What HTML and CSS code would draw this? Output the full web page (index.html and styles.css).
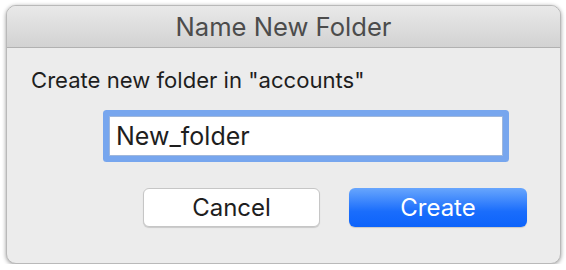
FILE: index.html
```html
<!DOCTYPE html>
<html>
<head>
<meta charset="utf-8">
<link rel="stylesheet" href="styles.css">
</head>
<body>
<div class="window">
  <div class="titlebar">Name New Folder</div>
  <div class="content">
    <div class="prompt">Create new folder in "accounts"</div>
    <div class="field-row">
      <div class="field">New_folder</div>
    </div>
    <div class="buttons">
      <div class="btn cancel">Cancel</div>
      <div class="btn create">Create</div>
    </div>
  </div>
</div>
</body>
</html>
```
FILE: styles.css
```css
html, body {
  margin: 0;
  padding: 0;
  background: #ffffff;
}
body {
  padding: 5px 5px 0 6px;
  font-family: Inter, "Liberation Sans", sans-serif;
}
.window {
  width: 555px;
  height: 259px;
  box-sizing: border-box;
  border-radius: 10px;
  background: #ececec;
  border: 1px solid #b9b9b9;
  box-shadow: 0 1px 4px rgba(0,0,0,0.4);
  overflow: hidden;
  display: flex;
  flex-direction: column;
}
.titlebar {
  height: 42px;
  flex: none;
  box-sizing: border-box;
  background: linear-gradient(#e9e9e9, #d2d2d2);
  border-bottom: 1px solid #b1b1b1;
  color: #4c4c4c;
  font-size: 25.6px;
  display: flex;
  align-items: center;
  justify-content: center;
  padding-bottom: 1px;
}
.content {
  flex: 1;
  display: flex;
  flex-direction: column;
  padding: 20px 0 0 24px;
}
.prompt {
  font-size: 22.1px;
  color: #1e1e1e;
  line-height: 24px;
}
.field-row {
  padding: 24px 0 0 78px;
}
.field {
  width: 386px;
  height: 38px;
  box-sizing: content-box;
  background: #fff;
  border: 1px solid #9fb7dc;
  box-shadow: 0 0 0 6px #77a6ee;
  border-radius: 1px;
  font-size: 25px;
  color: #1e1e1e;
  display: flex;
  align-items: center;
  padding-left: 6px;
}
.buttons {
  display: flex;
  gap: 29px;
  padding: 32px 0 0 112px;
}
.btn {
  width: 177px;
  height: 39px;
  box-sizing: border-box;
  border-radius: 6px;
  font-size: 24px;
  display: flex;
  align-items: center;
  justify-content: center;
}
.cancel {
  background: #fff;
  color: #1e1e1e;
  border: 1px solid #c6c6c6;
  box-shadow: 0 1px 1px rgba(0,0,0,0.15);
}
.create {
  width: 178px;
  background: linear-gradient(#68a6fd, #1a6dfc 60%, #0c63fb);
  color: #fff;
  box-shadow: 0 1px 1px rgba(0,0,0,0.15);
}
```
